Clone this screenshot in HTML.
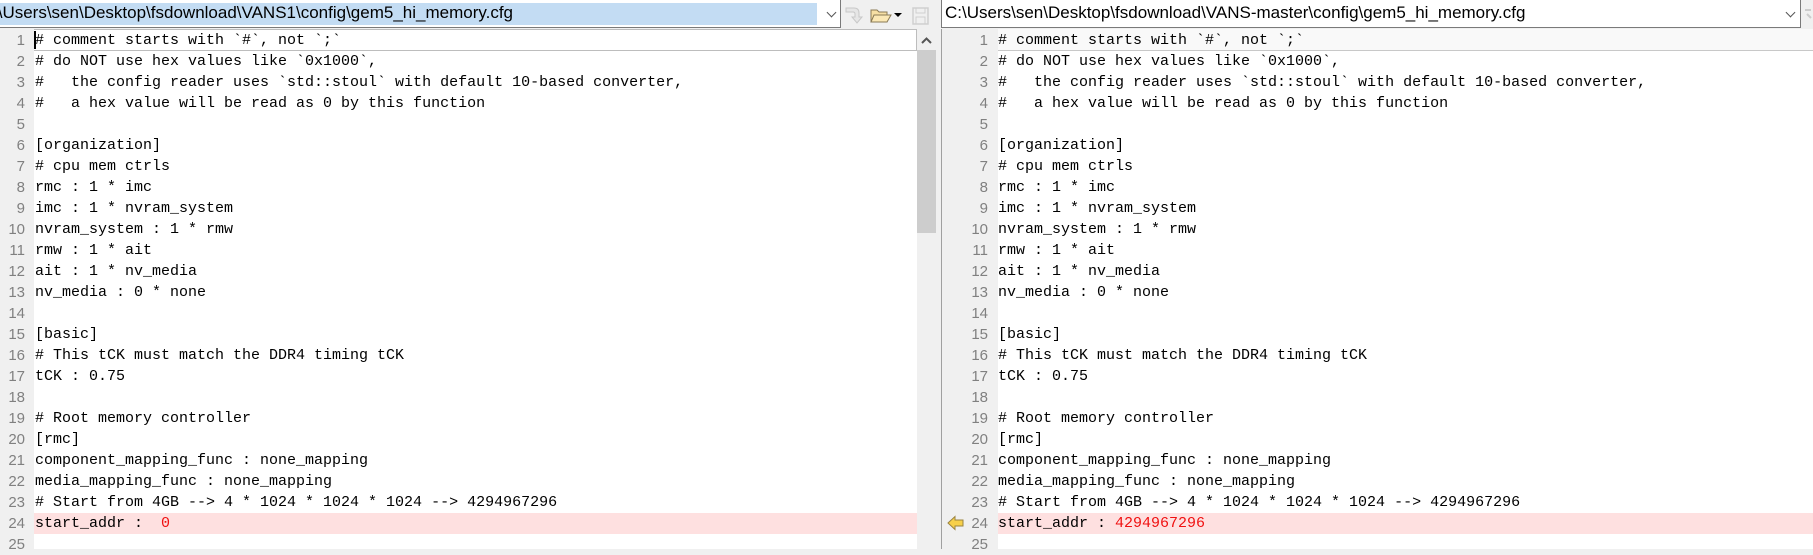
<!DOCTYPE html>
<html><head><meta charset="utf-8"><style>
*{margin:0;padding:0;box-sizing:border-box}
body{width:1813px;height:549px;overflow:hidden;background:#f0f0f0;position:relative;font-family:"Liberation Sans",sans-serif}
.abs{position:absolute}
.addr{position:absolute;top:0;height:28px;background:#fff;border:1px solid #7a7a7a;border-top:none;border-left:none;font-size:17px;line-height:26px;white-space:nowrap;overflow:hidden;color:#000}
.code{position:absolute;font-family:"Liberation Mono",monospace;font-size:15px;white-space:pre;color:#000}
.ln{position:absolute;height:21px;line-height:21px}
.num{position:absolute;font-size:15px;color:#808080;text-align:right;width:30px;height:21px;line-height:21px}
.chev{position:absolute;top:9px;width:7px;height:7px;border-right:1px solid #555;border-bottom:1px solid #555;transform:rotate(45deg)}
</style></head><body>
<!-- left address -->
<div class="addr" style="left:0;width:841px">
<div class="abs" style="left:0;top:3px;width:817px;height:22px;background:#c3dcf3"></div>
<div class="abs" style="left:-7px;top:0">:\Users\sen\Desktop\fsdownload\VANS1\config\gem5_hi_memory.cfg</div>
<div class="chev" style="left:828px"></div>
</div>
<!-- toolbar icons -->
<svg class="abs" style="left:842px;top:2px" width="100" height="24">
<path d="M4 6 H12 Q17 6 17 11 V15 H20 L15 21 L10 15 H13 V12 Q13 10 11 10 H4 Z" fill="#e6e6e6" stroke="#c8c8c8"/>
<path d="M29 8 H35 L37 10 H45 V20 H29 Z" fill="#f6dfa4" stroke="#8a7a55"/>
<path d="M29 20 L32 13 H49 L45 20 Z" fill="#fbe8b5" stroke="#8a7a55"/>
<path d="M52 11 H60 L56 15 Z" fill="#000"/>
<rect x="71" y="6" width="15" height="16" fill="none" stroke="#cfcfcf" stroke-width="1.5"/>
<rect x="74" y="6" width="9" height="5" fill="none" stroke="#cfcfcf"/>
<rect x="74" y="15" width="9" height="7" fill="none" stroke="#cfcfcf"/>
</svg>
<!-- right address -->
<div class="addr" style="left:941px;width:860px;border-left:1px solid #7a7a7a">
<div class="abs" style="left:3px;top:0">C:\Users\sen\Desktop\fsdownload\VANS-master\config\gem5_hi_memory.cfg</div>
<div class="chev" style="left:845px"></div>
</div>
<svg class="abs" style="left:1803px;top:6px" width="10" height="16"><path d="M2 4 H8 M4 8 L8 12" stroke="#ccc" stroke-width="2" fill="none"/></svg>

<!-- left pane -->
<div class="abs" style="left:0;top:29px;width:917px;height:520px;background:#fff"></div>
<div class="abs" style="left:0;top:29px;width:34px;height:520px;background:#f0f0f0"></div>
<div class="abs" style="left:34px;top:29px;width:883px;height:22px;border:1px solid #bdbdbd;border-left:none"></div>
<div class="abs" style="left:34px;top:31px;width:2px;height:18px;background:#000"></div>
<div class="abs" style="left:34px;top:513px;width:883px;height:21px;background:#fee0e0"></div>
<!-- scrollbar -->
<div class="abs" style="left:917px;top:29px;width:19px;height:520px;background:#f0f0f0"></div>
<div class="abs" style="left:917px;top:50px;width:19px;height:183px;background:#cdcdcd"></div>
<svg class="abs" style="left:917px;top:34px" width="19" height="12"><path d="M5 9 L9.5 4.5 L14 9" stroke="#555" stroke-width="2" fill="none"/></svg>
<div class="abs" style="left:941px;top:29px;width:1px;height:520px;background:#a0a0a0"></div>

<!-- right pane -->
<div class="abs" style="left:942px;top:29px;width:871px;height:520px;background:#fff"></div>
<div class="abs" style="left:942px;top:29px;width:56px;height:520px;background:#f0f0f0"></div>
<div class="abs" style="left:998px;top:29px;width:815px;height:22px;background:#f9f9f9;border-bottom:1px solid #c8c8c8"></div>
<div class="abs" style="left:998px;top:513px;width:815px;height:21px;background:#fee0e0"></div>
<svg class="abs" style="left:947px;top:515px" width="18" height="16"><path d="M1 8 L8 1.5 V5 H16 V11 H8 V14.5 Z" fill="#f7d04a" stroke="#9a8340"/></svg>

<div id="L"></div>
<script>
var lines=["# comment starts with `#`, not `;`","# do NOT use hex values like `0x1000`,","#   the config reader uses `std::stoul` with default 10-based converter,","#   a hex value will be read as 0 by this function","","[organization]","# cpu mem ctrls","rmc : 1 * imc","imc : 1 * nvram_system","nvram_system : 1 * rmw","rmw : 1 * ait","ait : 1 * nv_media","nv_media : 0 * none","","[basic]","# This tCK must match the DDR4 timing tCK","tCK : 0.75","","# Root memory controller","[rmc]","component_mapping_func : none_mapping","media_mapping_func : none_mapping","# Start from 4GB --> 4 * 1024 * 1024 * 1024 --> 4294967296","start_addr : ",""];
var h="";
for(var i=0;i<25;i++){
 var t=30+i*21;
 var l=lines[i].replace(/&/g,"&amp;").replace(/</g,"&lt;");
 var lt=l,rt=l;
 if(i==23){lt=l+' <span style="color:#f01010">0</span>';rt=l+'<span style="color:#f01010">4294967296</span>';}
 h+='<div class="num" style="left:-5px;top:'+t+'px">'+(i+1)+'</div>';
 h+='<div class="num" style="left:958px;top:'+t+'px">'+(i+1)+'</div>';
 h+='<div class="code ln" style="left:35px;top:'+t+'px">'+lt+'</div>';
 h+='<div class="code ln" style="left:998px;top:'+t+'px">'+rt+'</div>';
}
document.getElementById("L").innerHTML=h;
</script>
</body></html>
